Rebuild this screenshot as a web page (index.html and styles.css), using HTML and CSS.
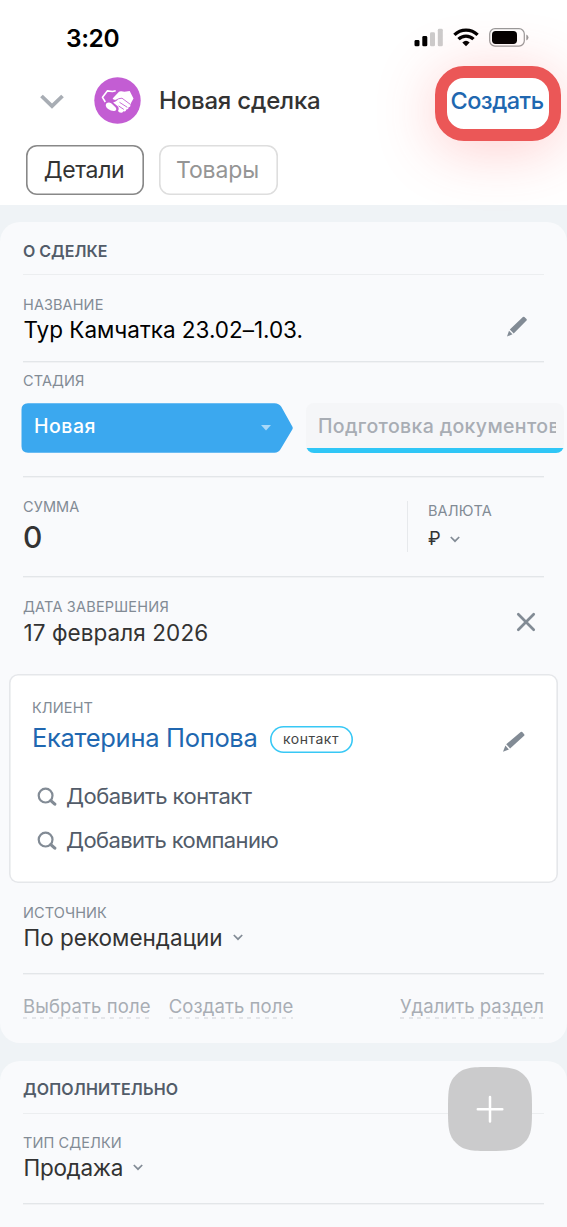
FILE: index.html
```html
<!DOCTYPE html>
<html lang="ru">
<head>
<meta charset="utf-8">
<title>Новая сделка</title>
<link rel="stylesheet" href="styles.css">
</head>
<body>
<header class="top">
  <div class="status">
    <span class="time">3:20</span>
    <svg class="status-icons" width="116" height="22" viewBox="0 0 116 22">
      <rect x="1.500" y="13" width="5" height="6.300" rx="1.400"/>
      <rect x="9.300" y="9" width="5" height="10.300" rx="1.400"/>
      <rect x="17" y="5.300" width="5" height="14" rx="1.400" fill="#ccc"/>
      <rect x="24.800" y="1.800" width="5" height="17.500" rx="1.400" fill="#ccc"/>
      <g fill="none" stroke="#000" stroke-width="3.300">
        <path d="M41.400 7.900a16.500 16.500 0 0 1 23.200 0"/>
        <path d="M45.500 12.100a10.700 10.700 0 0 1 15 0"/>
      </g>
      <path d="M49.300 15.400a5.600 5.600 0 0 1 7.400 0L53 19.200z"/>
      <rect x="76.700" y="1.700" width="34.600" height="17.400" rx="5.300" fill="none" stroke="#999" stroke-width="1.200"/>
      <rect x="79" y="4" width="25" height="12.900" rx="3.700"/>
      <path d="M113.300 7.500q2.200.8 2.200 3t-2.200 3z" fill="#999"/>
    </svg>
  </div>
  <div class="bar">
    <svg class="back" width="26" height="18" viewBox="0 0 26 18"><path d="M2.500 3 13 13.200 23.500 3" fill="none" stroke="#a8adb4" stroke-width="3.800"/></svg>
    <svg class="avatar" width="47" height="47" viewBox="0 0 47 47">
      <circle cx="23.500" cy="23.500" r="23.200" fill="#c35dd3"/>
      <path d="M11.300 25 8.500 20.300l4.800-6.400 5.200.6 3.200-.8" fill="none" stroke="#fff" stroke-width="1.600" stroke-linejoin="round"/>
      <path d="M18.600 21.500 25 14.800q1-.9 2.400-.6l3 .6 5.300-.9L39.500 21.500 37 26l-.6 2.200q.3 2-1.800 2 .1 2.400-2.300 2.300-.4 2.500-2.900 1.700-1.300 2.400-4.200 1.100l-1.200-1.200q1.600-3.200-.6-5.200l-4.300-3.500q2.600-.6 4.800-2.600-4 1.200-5.300-1.300z" fill="#fff"/>
      <path d="M18.800 23.400q3 .6 6-1.700l3.200-.5 8.500 6.300M25.500 25.300l7.800 5M24.500 28.900l5.300 3.500" fill="none" stroke="#c35dd3" stroke-width=".9"/>
      <path d="M12.200 26.400q2.500-1.800 5-.2l4.300 4.100q2 2.900-1.100 3.700-3.100.3-6.300-2-3.400-2.800-1.900-5.600z" fill="#fff"/>
    </svg>
    <h1 class="title">Новая сделка</h1>
    <button class="create">Создать</button>
  </div>
  <nav class="tabs">
    <button class="tab tab-active">Детали</button>
    <button class="tab">Товары</button>
  </nav>
</header>

<main class="content">
  <section class="card about">
    <h2 class="card-title">О СДЕЛКЕ</h2>
    <div class="row row-name">
      <div class="field">
        <div class="label">НАЗВАНИЕ</div>
        <div class="value v-name">Тур Камчатка 23.02–1.03.</div>
      </div>
      <svg class="pencil" width="22" height="22" viewBox="0 0 22 22" fill="#828b95"><path d="M16.900 1q.8-.7 1.500 0l2.100 2.100q.7.800 0 1.500L7.700 17.400 3.800 13.500zM3 14.700l3.500 3.500L1 20.600z"/></svg>
    </div>
    <div class="row row-stage">
      <div class="label">СТАДИЯ</div>
      <div class="stages">
        <div class="stage-now">
          <svg class="stage-shape" width="272" height="50" viewBox="0 0 272 50"><path d="M7 .3h246.500q4.500 0 6.800 3.500L271.300 23.400q.9 1.500 0 3L259.500 46.300q-2 3.400-6 3.400H7q-6.500 0-6.500-6.500V6.800Q.5.300 7 .3z" fill="#3ba8ef"/></svg>
          <span class="stage-text">Новая</span>
          <svg class="stage-caret" width="10" height="6" viewBox="0 0 10 6"><path d="M0 0h10L5 5.500z" fill="#a9d8f8"/></svg>
        </div>
        <div class="stage-next"><span class="next-text">Подготовка документов</span></div>
      </div>
    </div>
    <div class="row row-sum">
      <div class="field">
        <div class="label">СУММА</div>
        <div class="sum">0</div>
      </div>
      <div class="currency">
        <div class="label">ВАЛЮТА</div>
        <div class="cur-value">₽<svg class="chev" width="10" height="7" viewBox="0 0 10 7"><path d="m.8 1 4.200 4.200L9.200 1"/></svg></div>
      </div>
    </div>
    <div class="row row-date">
      <div class="field">
        <div class="label l-date">ДАТА ЗАВЕРШЕНИЯ</div>
        <div class="value v-date">17 февраля 2026</div>
      </div>
      <svg class="close" width="20" height="20" viewBox="0 0 20 20"><path d="m2.300 2.300 15.400 15.400m0-15.400L2.300 17.700" stroke="#828b95" stroke-width="2.700" stroke-linecap="round"/></svg>
    </div>
    <div class="client">
      <div class="label">КЛИЕНТ</div>
      <div class="person">
        <a class="person-name">Екатерина Попова</a>
        <span class="badge">контакт</span>
        <svg class="pencil pencil-client" width="24" height="22" viewBox="0 0 24 22" fill="#828b95"><path d="M18.700 1q.8-.6 1.500.1l2 2.200q.6.900-.1 1.500L8.100 17.400 4.200 13.200zM3.400 14.600l3.500 3.800L1 20.700z"/></svg>
      </div>
      <div class="add"><svg width="20" height="20" viewBox="0 0 20 20"><g fill="none" stroke="#828b95"><circle cx="8.600" cy="8.600" r="6.900" stroke-width="2.200"/><path d="m13.800 13.600 4 3.500" stroke-width="3.200" stroke-linecap="round"/></g></svg><span>Добавить контакт</span></div>
      <div class="add"><svg width="20" height="20" viewBox="0 0 20 20"><g fill="none" stroke="#828b95"><circle cx="8.600" cy="8.600" r="6.900" stroke-width="2.200"/><path d="m13.800 13.600 4 3.500" stroke-width="3.200" stroke-linecap="round"/></g></svg><span class="a-company">Добавить компанию</span></div>
    </div>
    <div class="row row-source">
      <div class="field">
        <div class="label">ИСТОЧНИК</div>
        <div class="value"><span>По рекомендации</span><svg class="chev" width="10" height="7" viewBox="0 0 10 7"><path d="m.8 1 4.200 4.200L9.200 1"/></svg></div>
      </div>
    </div>
    <div class="links">
      <a class="link">Выбрать поле</a>
      <a class="link k-create">Создать поле</a>
      <a class="link k-delete">Удалить раздел</a>
    </div>
  </section>

  <section class="card extra">
    <h2 class="card-title card-title-extra">ДОПОЛНИТЕЛЬНО</h2>
    <div class="row row-type">
      <div class="field">
        <div class="label">ТИП СДЕЛКИ</div>
        <div class="value"><span class="v-type">Продажа</span><svg class="chev" width="10" height="7" viewBox="0 0 10 7"><path d="m.8 1 4.200 4.200L9.200 1"/></svg></div>
      </div>
    </div>
  </section>
</main>
<button class="fab" aria-label="Добавить">
  <svg width="86" height="86" viewBox="0 0 86 86"><path d="M43 1C62 1 69.500 1.500 77 9S85 24 85 43 84.500 69.500 77 77 62 85 43 85 16.500 84.500 9 77 1 62 1 43 1.500 16.500 9 9 24 1 43 1z" fill="#cbcbcc"/><path d="M43 31v24.500M30.800 43.200h24.500" stroke="#fff" stroke-width="2.500" stroke-linecap="round"/></svg>
</button>
</body>
</html>
```
FILE: styles.css
```css
* { box-sizing: border-box; }
body {
  margin: 0;
  width: 567px;
  height: 1227px;
  overflow: hidden;
  position: relative;
  background: #eff3f6;
  color: #333;
  font-family: Inter, "Noto Sans", sans-serif;
}
h1, h2 { margin: 0; }
button { font-family: inherit; margin: 0; padding: 0; background: none; }
svg { display: block; flex: none; }

.top { height: 205px; background: #fff; }
.status { height: 66px; padding: 22px 38px 0 66px; display: flex; justify-content: space-between; }
.time { font-size: 24.500px; line-height: 32px; font-weight: 600; color: #000; letter-spacing: -.4px; }
.status-icons { margin-top: 5px; }
.bar { height: 75px; padding: 0 6px 0 39px; display: flex; align-items: center; }
.back { margin-top: -4px; }
.avatar { margin: -7px 0 0 29px; }
.title { margin: -5px 0 0 18px; font-size: 24px; line-height: 30px; font-weight: 500; letter-spacing: -.2px; white-space: nowrap; }
.create {
  width: 126px;
  height: 75px;
  margin-left: auto;
  padding: 0 2px 6px 0;
  border: 12px solid #eb5757;
  border-radius: 29px;
  background: #fff;
  color: #2067b0;
  font-size: 23.500px;
  font-weight: 500;
  letter-spacing: -.5px;
  white-space: nowrap;
  box-shadow: 0 8px 60px rgba(255, 70, 70, .27);
}
.tabs { padding: 4px 26px; display: flex; gap: 15px; }
.tab {
  width: 119px;
  height: 50px;
  border: 0;
  border-radius: 11px;
  box-shadow: inset 0 0 0 1.600px #dedede;
  font-size: 23px;
  line-height: 50px;
  letter-spacing: -.15px;
  padding-right: 2px;
  color: #959595;
}
.tab-active { width: 118px; box-shadow: inset 0 0 0 1.600px #888; color: #333; letter-spacing: -.4px; }

.content { padding-top: 17px; }
.card { background: #f9fafc; border-radius: 20px; }
.about { height: 821px; }
.extra { height: 200px; margin-top: 18px; }
.card-title {
  height: 53px;
  margin: 0 23px;
  padding-top: 19px;
  border-bottom: 1px solid #eceef0;
  font-size: 16px;
  line-height: 20px;
  font-weight: 600;
  color: #525c69;
}
.card-title-extra { padding-top: 18px; letter-spacing: .15px; }
.row { margin: 0 23px; border-bottom: 1px solid #e3e6e9; box-shadow: 0 1px 0 #f1f2f4; display: flex; }
.field { flex: 1; }
.label { font-size: 14.500px; line-height: 20px; letter-spacing: .1px; color: #828b95; white-space: nowrap; }
.value { margin: 1px 0 0 .5px; font-size: 22.500px; line-height: 28px; white-space: nowrap; display: flex; align-items: center; }
.chev { fill: none; stroke: #828b95; stroke-width: 1.700; margin: -2px 0 0 10px; }

.row-name { height: 87px; padding-top: 20px; }
.v-name { color: #000; letter-spacing: -.02px; }
.v-date { margin-top: 2px; letter-spacing: .08px; }
.v-type { letter-spacing: -.3px; }
.pencil { margin: 21px 16px 0 0; }
.row-stage { height: 115px; padding-top: 9px; display: block; }
.stages { margin: 12px -23px 0 -2px; display: flex; }
.stage-now { position: relative; width: 272px; height: 50px; display: flex; justify-content: space-between; align-items: center; padding: 0 22px 4px 13px; }
.stage-shape { position: absolute; left: 0; top: 0; }
.stage-text { position: relative; color: #fff; font-size: 19.500px; font-weight: 500; letter-spacing: .5px; }
.stage-caret { position: relative; margin-top: 4px; }
.stage-next {
  width: 258px;
  height: 50px;
  margin-left: 13px;
  padding-left: 12px;
  border-radius: 8px;
  background: linear-gradient(#f5f6f8 45px, #2fc6f6 45px);
  color: #a8adb4;
  font-size: 19.500px;
  line-height: 46px;
  font-weight: 500;
  letter-spacing: .35px;
}
.next-text { display: block; width: 238px; height: 45px; overflow: hidden; white-space: nowrap; }
.row-sum { height: 100px; padding-top: 20px; }
.sum { margin: 2px 0 0; font-size: 30px; line-height: 36px; font-weight: 500; letter-spacing: -1px; }
.currency { width: 137px; height: 51px; margin-top: 4px; padding-left: 20px; border-left: 1px solid #e7e9ec; }
.cur-value { margin-top: 6px; font-size: 18px; line-height: 24px; display: flex; align-items: center; }
.cur-value .chev { margin: 0 0 0 9px; }
.row-date { height: 97px; padding-top: 20px; border: 0; box-shadow: none; }
.l-date { letter-spacing: .2px; }
.close { margin: 15px 8px 0 0; }

.client { margin: 0 9px; height: 209px; padding: 24px 32px 0 23px; border-radius: 9px; box-shadow: inset 0 0 0 1.600px #e5e7ea; background: #fff; }
.person { margin: 4px 0 23px; height: 37px; display: flex; align-items: flex-start; }
.person-name { font-size: 25.500px; line-height: 32px; letter-spacing: -.3px; color: #2067b0; white-space: nowrap; }
.badge { width: 83px; height: 27px; margin: 4px 0 0 12px; border-radius: 14px; box-shadow: inset 0 0 0 1.600px #38c8f5; font-size: 14px; line-height: 25px; letter-spacing: .5px; text-align: center; color: #444; }
.pencil-client { margin: 9px 0 0 auto; }
.add { height: 43.500px; padding-left: 5px; display: flex; align-items: flex-start; gap: 9px; font-size: 22px; line-height: 28px; letter-spacing: -.5px; color: #525c69; white-space: nowrap; }
.a-company { letter-spacing: -.6px; }
.add svg { margin-top: 5px; }

.row-source { height: 91px; padding-top: 20px; }
.links { margin: 0 23px; padding-top: 20px; display: flex; }
.link {
  height: 25px;
  color: #a8adb4;
  font-size: 18.500px;
  line-height: 24px;
  letter-spacing: .1px;
  white-space: nowrap;
  background: repeating-linear-gradient(90deg, #e3e5e9 0 4px, transparent 4px 8.700px) 0 100% / 100% 2px no-repeat;
}
.k-create { margin-left: 18px; }
.k-delete { margin-left: auto; letter-spacing: .02px; }
.row-type { height: 90px; padding-top: 19px; }
.fab { position: absolute; left: 447px; top: 1066px; border: 0; }
```
